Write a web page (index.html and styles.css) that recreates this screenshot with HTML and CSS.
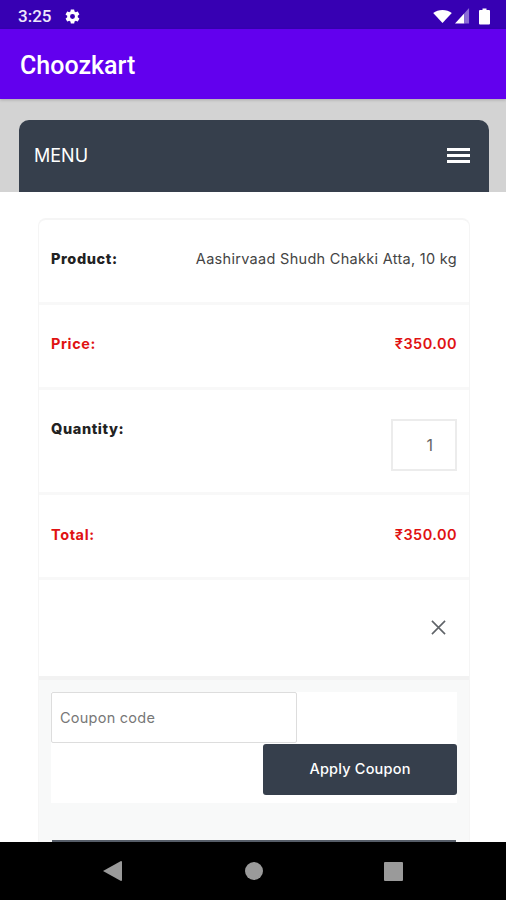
FILE: index.html
```html
<!DOCTYPE html>
<html lang="en">
<head>
<meta charset="utf-8">
<title>Choozkart</title>
<link rel="stylesheet" href="styles.css">
</head>
<body>
<div class="phone">
  <div class="status">
    <div class="status-left">
      <span class="time">3:25</span>
      <svg class="gear" viewBox="0 0 24 24"><path fill="#fff" d="M19.4 13c.04-.33.06-.66.06-1s-.02-.67-.06-1l2.1-1.65c.2-.15.25-.42.12-.64l-2-3.46c-.12-.22-.39-.3-.61-.22l-2.49 1c-.52-.4-1.08-.73-1.69-.98l-.38-2.65A.49.49 0 0 0 14 2h-4c-.25 0-.46.18-.49.42l-.38 2.65c-.61.25-1.17.59-1.69.98l-2.49-1c-.23-.09-.49 0-.61.22l-2 3.46c-.13.22-.07.49.12.64L4.57 11c-.04.33-.07.66-.07 1s.03.67.07 1l-2.11 1.65c-.19.15-.25.42-.12.64l2 3.46c.12.22.39.3.61.22l2.49-1c.52.4 1.08.73 1.69.98l.38 2.65c.03.24.24.42.49.42h4c.25 0 .46-.18.49-.42l.38-2.65c.61-.25 1.17-.59 1.69-.98l2.49 1c.23.09.49 0 .61-.22l2-3.46c.12-.22.07-.49-.12-.64L19.4 13zM12 15.5a3.5 3.5 0 1 1 0-7 3.5 3.5 0 0 1 0 7z"/></svg>
    </div>
    <div class="status-right">
      <svg class="wifi" viewBox="0 0 20 14"><path fill="#fff" d="M0 3.2C2.7 1.2 6.2 0 10 0s7.300 1.200 10 3.200L10 14z"/></svg>
      <svg class="signal" viewBox="0 0 16 16"><path fill="#fff" d="M0 16 10 5v11z"/><path fill="#8c6cd6" d="M10 5l5-5.500V16h-5z"/></svg>
      <svg class="battery" viewBox="0 0 11 16"><path fill="#fff" d="M3.500 0h4v1.500H10a1 1 0 0 1 1 1V15a1 1 0 0 1-1 1H1a1 1 0 0 1-1-1V2.500a1 1 0 0 1 1-1h2.500z"/></svg>
    </div>
  </div>
  <header class="appbar">Choozkart</header>
  <div class="webview">
    <div class="menu-zone">
      <div class="menu">
        <span class="menu-label">MENU</span>
        <span class="burger"><i></i><i></i><i></i></span>
      </div>
    </div>
    <div class="content">
      <div class="card">
        <div class="row row-product">
          <span class="label">Product:</span>
          <span class="value">Aashirvaad Shudh Chakki Atta, 10 kg</span>
        </div>
        <div class="row row-price">
          <span class="label">Price:</span>
          <span class="value">₹350.00</span>
        </div>
        <div class="row row-qty">
          <span class="label">Quantity:</span>
          <span class="qty">1</span>
        </div>
        <div class="row row-price row-total">
          <span class="label">Total:</span>
          <span class="value">₹350.00</span>
        </div>
        <div class="row row-remove">
          <svg class="close" viewBox="0 0 16 16"><path d="M1 1l14 14M15 1 1 15" fill="none" stroke="#5f6368" stroke-width="1.700"/></svg>
        </div>
        <div class="coupon-zone">
          <div class="coupon">
            <div class="coupon-input">Coupon code</div>
            <div class="coupon-action"><span class="btn">Apply Coupon</span></div>
          </div>
          <div class="next-btn"></div>
        </div>
      </div>
    </div>
  </div>
  <nav class="navbar">
    <svg class="nav-back" viewBox="0 0 19 20"><path fill="#9a9a9a" d="M0 10 18 0a1 1 0 0 1 1 1v18a1 1 0 0 1-1 1z"/></svg>
    <span class="nav-home"></span>
    <span class="nav-recent"></span>
  </nav>
</div>
</body>
</html>
```
FILE: styles.css
```css
* { box-sizing: border-box; }
html, body { margin: 0; padding: 0; }
body { width: 506px; height: 900px; overflow: hidden; font-family: "Inter", "Roboto", sans-serif; background: #fff; }
.phone { width: 506px; height: 900px; display: flex; flex-direction: column; overflow: hidden; }

.status { height: 29px; flex: none; background: #3700b3; color: #fff; display: flex; align-items: center; justify-content: space-between; padding: 3px 16px 0 18px; }
.status-left { display: flex; align-items: center; gap: 14px; }
.time { font-family: "Roboto", sans-serif; font-size: 17px; font-weight: 500; color: #eee8fb; }
.gear { width: 17px; height: 17px; display: block; margin-left: -1px; }
.status-right { display: flex; align-items: center; }
.wifi { width: 19px; height: 13px; display: block; margin-right: 3px; }
.signal { width: 15px; height: 16px; display: block; margin-right: 9px; }
.battery { width: 11px; height: 17px; display: block; }

.appbar { height: 70px; flex: none; background: #6200ee; color: #fff; font-family: "Roboto", sans-serif; font-size: 25px; font-weight: 500; padding: 3px 20px 0; display: flex; align-items: center; position: relative; z-index: 1; box-shadow: 0 1px 3px rgba(0,0,0,.2); }

.webview { flex: 1; min-height: 0; overflow: hidden; display: flex; flex-direction: column; }
.menu-zone { height: 93px; flex: none; background: #d3d3d3; padding: 21px 17px 0 19px; }
.menu { height: 72px; background: #363f4c; border-radius: 10px 10px 0 0; display: flex; align-items: center; justify-content: space-between; padding: 0 19px 2px 15px; color: #fff; }
.menu-label { font-size: 18px; font-weight: 400; }
.burger { width: 23px; display: flex; flex-direction: column; gap: 3px; }
.burger i { display: block; height: 3px; background: #fff; }

.content { flex: 1; min-height: 0; background: #fff; padding: 26px 36px 0 38px; }
.card { border: 1px solid #f5f5f5; border-top-width: 2px; border-radius: 8px 8px 0 0; border-bottom: 0; }
.row { display: flex; justify-content: space-between; border-bottom: 3px solid #f8f8f8; padding: 0 12px; font-size: 14px; line-height: 20px; }
.row-product, .row-price { height: 85px; align-items: center; padding-bottom: 5px; }
.row-total { padding-bottom: 3px; }
.row-qty { height: 105px; padding-top: 29px; }
.label { font-weight: 800; color: #222; font-size: 14.500px; letter-spacing: .6px; }
.value { color: #444; font-size: 14.500px; letter-spacing: .3px; }
.row-price .label, .row-price .value { color: #e01212; font-weight: 700; }
.row-price .value { font-weight: 600; letter-spacing: .45px; }
.qty { width: 66px; height: 52px; border: 2px solid #ececec; color: #666; font-size: 16px; display: flex; align-items: center; justify-content: flex-end; padding-right: 22px; }
.row-remove { height: 100px; align-items: center; justify-content: flex-end; padding: 0 23px 2px 0; border-bottom: 4px solid #f2f2f2; }
.close { width: 15px; height: 15px; display: block; }

.coupon-zone { background: #f8f9f9; padding: 12px 12px 0; height: 164px; }
.coupon { background: #fff; height: 111px; }
.coupon-input { width: 246px; height: 51px; border: 1px solid #ddd; border-radius: 2px; background: #fff; color: #777; font-size: 14.500px; letter-spacing: .25px; display: flex; align-items: center; padding-left: 8px; }
.coupon-action { display: flex; justify-content: flex-end; padding-top: 1px; }
.btn { width: 194px; height: 51px; background: #363f4c; border-radius: 3px; color: #fff; font-size: 14.500px; font-weight: 500; letter-spacing: .2px; display: flex; align-items: center; justify-content: center; padding-bottom: 2px; }
.next-btn { height: 20px; background: #565d68; margin: 37px 1px 0; }

.navbar { height: 58px; flex: none; background: #000; display: flex; align-items: center; padding: 0 103px; justify-content: space-between; position: relative; z-index: 1; }
.nav-back { width: 19px; height: 20px; display: block; }
.nav-home { width: 18px; height: 18px; border-radius: 50%; background: #9a9a9a; display: block; margin-left: 2px; }
.nav-recent { width: 19px; height: 19px; border-radius: 1px; background: #9a9a9a; display: block; }
```
